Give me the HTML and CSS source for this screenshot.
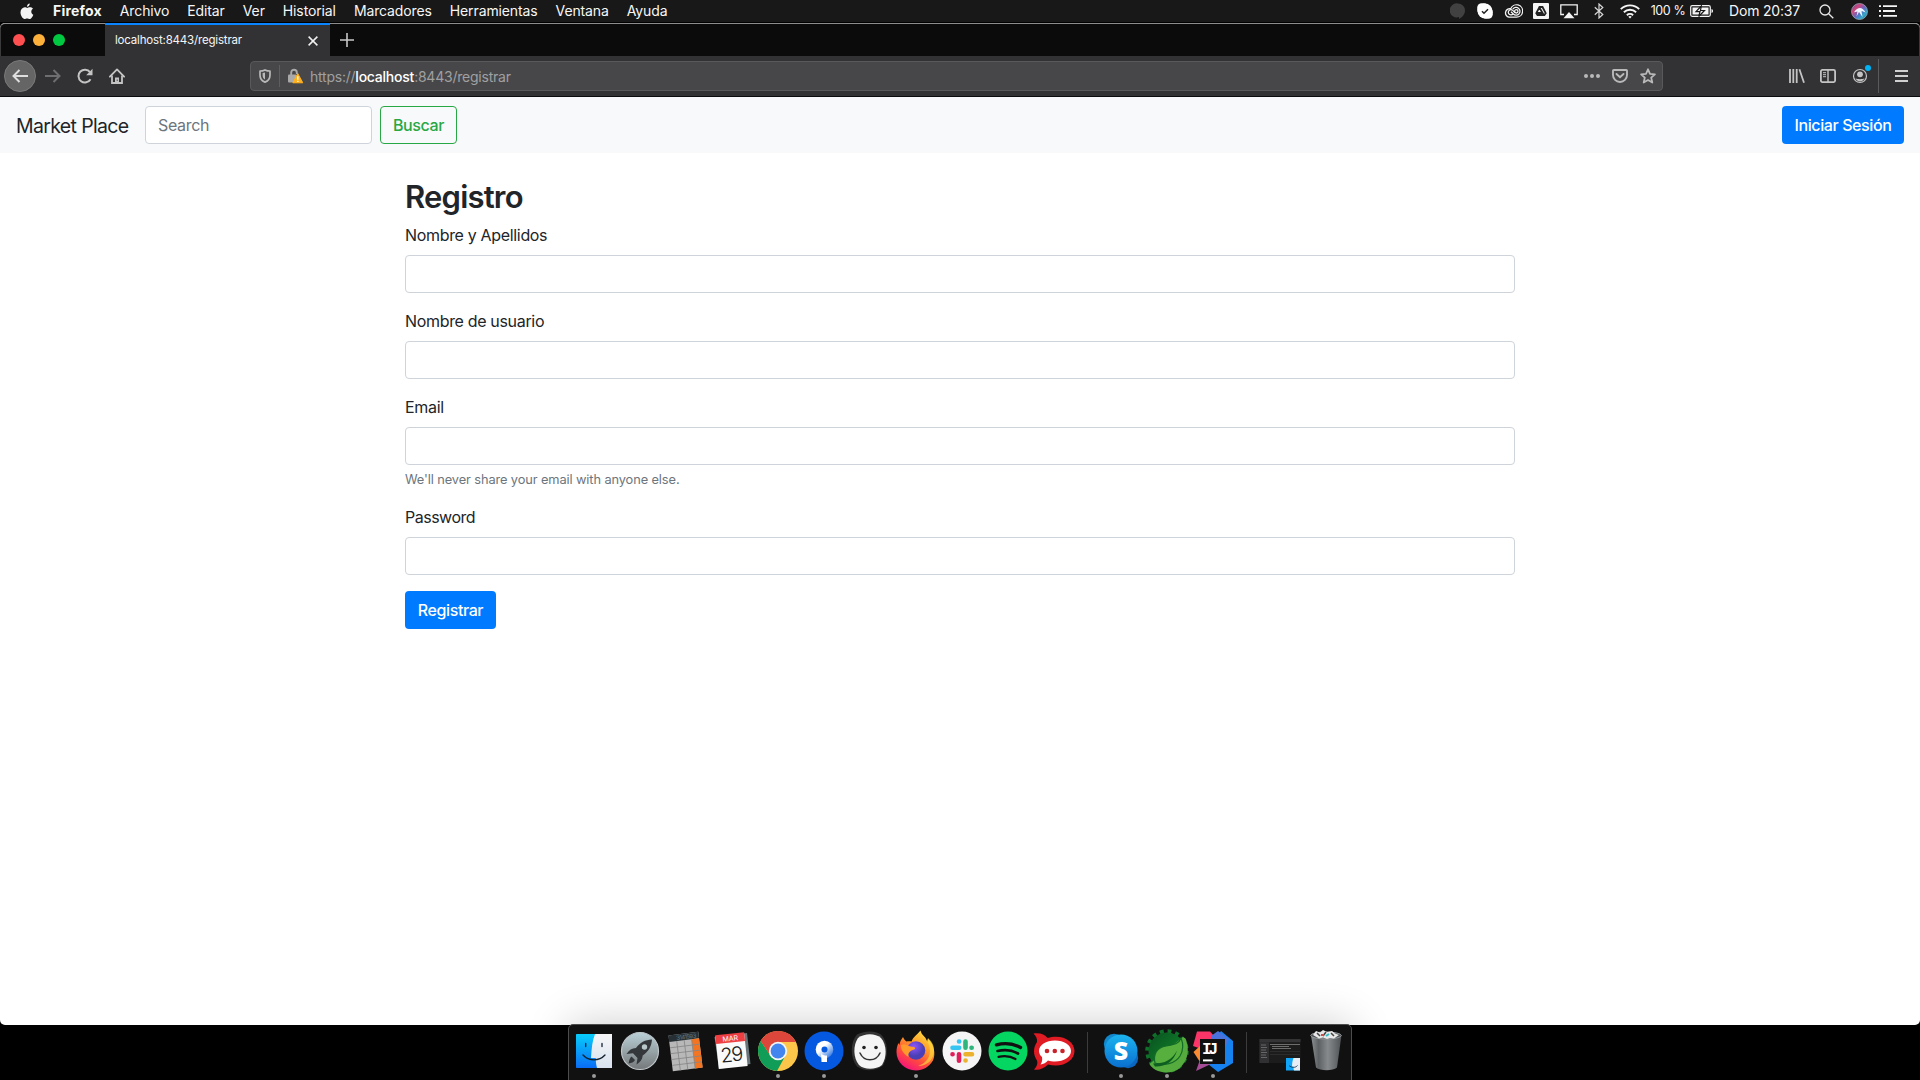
FILE: index.html
```html
<!DOCTYPE html>
<html lang="es">
<head>
<meta charset="utf-8">
<title>Registro</title>
<link rel="stylesheet" href="styles.css">
</head>
<body>
<div class="screen">
  <header class="menubar">
    <nav class="app-menu">
      <svg class="apple" width="14" height="17" viewBox="0 0 14 17"><path fill="#f4f4f4" d="M9.900 4.300c-1.100-.1-2 .6-2.600.6S5.800 4.300 4.800 4.300C2.600 4.400.5 6.200.5 9.300c0 3.200 2.200 6.700 4 6.700.9 0 1.400-.6 2.600-.6s1.600.6 2.600.6c1.500 0 3-2.400 3.600-4.300-2.500-1.100-2.700-4.700-.3-6-.8-1-1.900-1.400-3.100-1.400zM9.700.5C8.200.7 6.900 2 7 3.800 8.600 3.800 9.900 2.300 9.700.5z"/></svg>
      <span class="app-name">Firefox</span>
      <span>Archivo</span>
      <span>Editar</span>
      <span>Ver</span>
      <span>Historial</span>
      <span>Marcadores</span>
      <span>Herramientas</span>
      <span>Ventana</span>
      <span>Ayuda</span>
    </nav>
    <div class="status">
      <svg width="16" height="18" viewBox="0 0 16 18"><path fill="#414141" d="M8 1.500a7 7 0 0 1 7 7c0 4-3 7-6 8.500v-2A7 7 0 1 1 8 1.500z"/></svg>
      <svg width="16" height="16" viewBox="0 0 16 16"><rect x=".2" y=".2" width="11" height="11" rx="4.500" fill="#fff"/><rect x="4.800" y="4.800" width="11" height="11" rx="4.500" fill="#fff"/><circle cx="8" cy="8" r="7.500" fill="#fff"/><path d="M5 8.200l2 2 4-4" stroke="#222" stroke-width="1.500" fill="none"/></svg>
      <svg width="20" height="14" viewBox="0 0 20 14" fill="none" stroke="#f4f4f4" stroke-width="1.300"><path d="M6 13.200h7.500a6.200 6.200 0 1 0-5.800-8.500A4.300 4.300 0 1 0 6 13.200z"/><path d="M10 9.800a2.600 2.600 0 1 1-.3-3.400l2.400 2.300"/><path d="M9.800 5.200a3.900 3.900 0 1 1 .5 4.800L8 7.800"/><circle cx="13.300" cy="7.300" r="1.700"/></svg>
      <svg width="16" height="16" viewBox="0 0 16 16"><rect width="16" height="16" rx="1" fill="#f4f4f4"/><path fill="none" stroke="#222" stroke-width="1.800" d="M6.500 4h3l3.200 6.200L11.400 12H4.500L3.300 10.200zM6.300 4.500L9.600 10H4"/></svg>
      <svg width="18" height="15" viewBox="0 0 18 15"><path fill="none" stroke="#f4f4f4" stroke-width="1.300" d="M4 10.500H.8V.9h16.400v9.600H14"/><path fill="#f4f4f4" d="M9 8l5.500 6.300h-11z"/></svg>
      <svg width="10" height="16" viewBox="0 0 10 16"><path fill="none" stroke="#d8d8d8" stroke-width="1.200" d="M.8 4.300l8 7.200L5 15V1l3.800 3.500-8 7.200"/></svg>
      <svg width="20" height="15" viewBox="0 0 20 15" fill="none" stroke="#f4f4f4" stroke-width="1.900"><path d="M.8 5.200a13 13 0 0 1 18.400 0M3.900 8.300a8.700 8.700 0 0 1 12.200 0M6.900 11.200a4.500 4.500 0 0 1 6.200 0"/><path fill="#f4f4f4" stroke="none" d="M8.300 12.800a2.500 2.500 0 0 1 3.400 0L10 14.600z"/></svg>
      <span class="battery-text">100&nbsp;%</span>
      <svg width="24" height="12" viewBox="0 0 24 12"><rect x=".7" y=".7" width="19.600" height="10.600" rx="1.500" fill="none" stroke="#f4f4f4" stroke-width="1.200"/><path fill="#f4f4f4" d="M2.500 2.500h16v7h-16zM21.500 4c2 .5 2 3.500 0 4z"/><path d="M11.300 1L6 6.700h4L8.700 11.500l5.800-6h-4z" fill="#f4f4f4" stroke="#181818" stroke-width="1.200"/></svg>
      <span class="clock">Dom 20:37</span>
      <svg width="15" height="15" viewBox="0 0 15 15" fill="none" stroke="#e8e8e8" stroke-width="1.300"><circle cx="6" cy="6" r="5"/><path d="M9.700 9.700l4.600 4.600"/></svg>
      <svg width="17" height="17" viewBox="0 0 17 17"><defs><linearGradient id="siri" x1="0" y1="0" x2="1" y2="1"><stop offset="0" stop-color="#4a5a9c"/><stop offset=".3" stop-color="#d0447c"/><stop offset=".55" stop-color="#5c6cc4"/><stop offset=".75" stop-color="#2fa9c8"/><stop offset="1" stop-color="#2b4f90"/></linearGradient></defs><circle cx="8.500" cy="8.500" r="8" fill="url(#siri)" stroke="#a8b0ba" stroke-width=".7"/><path d="M3 9.200c2-3 4-4.200 6-4.200s4 1.500 5.500 4.500c-1.800-.8-3-1.500-4-1.200l1 5.700C10 12 9 10 8 9L5.500 13.500 6.500 8.500z" fill="#eef6ff"/></svg>
      <svg width="18" height="12" viewBox="0 0 18 12" stroke="#f4f4f4" stroke-width="1.800"><path d="M0 1.200h2M4 1.200h14M0 6h2M4 6h12M0 10.800h2M4 10.800h14"/></svg>
    </div>
  </header>

  <section class="window">
    <div class="tabbar">
      <div class="lights"><i class="light close"></i><i class="light minimize"></i><i class="light zoom"></i></div>
      <div class="tab"><span class="tab-title">localhost:8443/registrar</span><svg width="10" height="10" viewBox="0 0 10 10"><path d="M.6.600l8.800 8.800M9.400.600L.6 9.400" stroke="#f0f0f0" stroke-width="1.500"/></svg></div>
      <svg class="new-tab" width="14" height="14" viewBox="0 0 14 14"><path d="M7 0v14M0 7h14" stroke="#c8c8c8" stroke-width="1.600"/></svg>
    </div>
    <div class="toolbar">
      <div class="nav-buttons">
        <span class="back"><svg width="16" height="14" viewBox="0 0 16 14"><path d="M16 7H1.500M7.500 1l-6 6 6 6" fill="none" stroke="#dedede" stroke-width="2"/></svg></span>
        <svg width="16" height="14" viewBox="0 0 16 14"><path d="M0 7h14.500M8.500 1l6 6-6 6" fill="none" stroke="#6e6e70" stroke-width="2"/></svg>
        <svg width="16" height="16" viewBox="0 0 16 16"><path d="M13.500 11.200A6.400 6.400 0 1 1 13 4.200" fill="none" stroke="#c4c4c4" stroke-width="2"/><path d="M15.500.8v6.400H9.200z" fill="#c4c4c4"/></svg>
        <svg width="16" height="16" viewBox="0 0 16 16"><path d="M.9 8.700L8 1.400l7.100 7.300" fill="none" stroke="#c4c4c4" stroke-width="1.800" stroke-linejoin="round" stroke-linecap="round"/><path d="M3 7.500V15h10V7.500" fill="none" stroke="#c4c4c4" stroke-width="1.800"/><path d="M6 15V9.500h4V15z" fill="#c4c4c4"/><path d="M8.200 11.600v1.200" stroke="#323234" stroke-width="1"/></svg>
      </div>
      <div class="urlbar">
        <svg class="shield" width="12" height="14" viewBox="0 0 12 14"><path d="M6 .9C4.500 1.600 2.800 2 1 2v4c0 3.500 1.500 5.800 5 7.100 3.500-1.300 5-3.600 5-7.100V2C9.200 2 7.500 1.600 6 .9z" fill="none" stroke="#b9b9ba" stroke-width="1.700" stroke-linejoin="round"/><path d="M6 3.500v7C4.300 9.500 3.600 8 3.600 6V4.100C4.500 4 5.300 3.800 6 3.500z" fill="#b9b9ba"/></svg>
        <i class="url-divider"></i>
        <svg class="lock" width="15" height="16" viewBox="0 0 15 16"><path d="M3.200 8V4.500a2.800 2.800 0 0 1 5.600 0V6" fill="none" stroke="#a9a9aa" stroke-width="1.900"/><rect x="0" y="6.500" width="8.500" height="8" rx="1" fill="#a9a9aa"/><path d="M9.800 5.600l5 9.200H4.800z" fill="#ffb01c" stroke="#ffb01c" stroke-width="1" stroke-linejoin="round"/><path d="M9.800 8.300v3.400M9.800 12.700v1.400" stroke="#fff" stroke-width="1.300"/></svg>
        <span class="url">https://<b>localhost</b>:8443/registrar</span>
        <span class="url-actions">
          <svg width="16" height="4" viewBox="0 0 16 4" fill="#b9b9ba"><circle cx="2" cy="2" r="2"/><circle cx="8" cy="2" r="2"/><circle cx="14" cy="2" r="2"/></svg>
          <svg width="16" height="14" viewBox="0 0 16 14" fill="none" stroke="#b9b9ba" stroke-width="1.900"><path d="M1.800 1h12.400c.5 0 .8.300.8.800V6A7 7 0 0 1 1 6V1.800c0-.5.300-.8.800-.8z"/><path d="M4.500 5L8 8.300 11.500 5" stroke-linecap="round"/></svg>
          <svg width="16" height="16" viewBox="0 0 16 16"><path d="M8 1.300l2 4.500 4.900.5-3.700 3.300 1.100 4.900L8 12l-4.300 2.500 1.100-4.900L1.100 6.300 6 5.800z" fill="none" stroke="#b9b9ba" stroke-width="1.800" stroke-linejoin="round"/></svg>
        </span>
      </div>
      <div class="tools">
        <svg class="library" width="16" height="14" viewBox="0 0 16 14" stroke="#c4c4c4" stroke-width="1.800"><path d="M1 0v14M4.300 0v14M7.700 0v14M10.400.300l4.600 13.400"/></svg>
        <svg width="16" height="14" viewBox="0 0 16 14" fill="none" stroke="#c4c4c4"><rect x=".9" y=".9" width="14.200" height="12.200" rx="1.500" stroke-width="1.800"/><path d="M8 1v12" stroke-width="1.400"/><path d="M3 3.700h3M3 5.700h3M3 7.700h3" stroke-width="1"/></svg>
        <span class="account"><svg width="16" height="16" viewBox="0 0 16 16"><circle cx="8" cy="8" r="6.500" fill="none" stroke="#c4c4c4" stroke-width="1.200"/><circle cx="8" cy="6.300" r="2.900" fill="#c4c4c4"/><path d="M3.500 10.300c2 1.200 7 1.200 9 0-.7 2-2.300 3.200-4.500 3.200s-3.800-1.200-4.500-3.200z" fill="#c4c4c4"/></svg><i class="badge"></i></span>
        <i class="tools-divider"></i>
        <svg width="13" height="12" viewBox="0 0 13 12" stroke="#d0d0d0" stroke-width="2"><path d="M0 1h13M0 6h13M0 11h13"/></svg>
      </div>
    </div>

    <div class="page">
      <nav class="navbar">
        <a class="brand">Market Place</a>
        <div class="control search">Search</div>
        <a class="btn btn-outline">Buscar</a>
        <a class="btn btn-primary login">Iniciar Sesión</a>
      </nav>
      <main class="container">
        <h2>Registro</h2>
        <div class="group"><label>Nombre y Apellidos</label><div class="control"></div></div>
        <div class="group"><label>Nombre de usuario</label><div class="control"></div></div>
        <div class="group"><label>Email</label><div class="control"></div><small>We'll never share your email with anyone else.</small></div>
        <div class="group"><label class="password">Password</label><div class="control"></div></div>
        <a class="btn btn-primary submit">Registrar</a>
      </main>
    </div>
  </section>

  <footer class="dock-area">
    <div class="dock">
      <div class="app running"><svg viewBox="0 0 44 44"><defs><linearGradient id="fin" x1="0" y1="0" x2="0" y2="1"><stop offset="0" stop-color="#08cdfb"/><stop offset="1" stop-color="#0a6df5"/></linearGradient><linearGradient id="fin2" x1="0" y1="0" x2="0" y2="1"><stop offset="0" stop-color="#f6f6f8"/><stop offset="1" stop-color="#d8e2ee"/></linearGradient></defs><rect x="4" y="5" width="36" height="34" rx=".8" fill="url(#fin)"/><path d="M23 5h17v34H25c-1-4-1.300-7-1.200-10H19C19.500 19 20.500 11 23 5z" fill="url(#fin2)"/><path d="M11 26c6 6.500 16 6.500 22 0M13.700 14.500v3M30 14.500v3" fill="none" stroke="#12202e" stroke-width="1.300" stroke-linecap="round"/></svg></div>
      <div class="app"><svg viewBox="0 0 44 44"><defs><linearGradient id="lau" x1="0" y1="0" x2="0" y2="1"><stop offset="0" stop-color="#b9d0d6"/><stop offset="1" stop-color="#75787a"/></linearGradient></defs><circle cx="22" cy="22" r="18.500" fill="url(#lau)" stroke="#bfc6ca" stroke-width="1.200"/><path d="M34 10.500c-7 .3-12 3-16 8.500-4 0-7 2-9.500 6l6.500-.7 4.500 4.700-1 6.500c3.500-2 6-5 6.200-9C30.500 22.500 33.500 17.500 34 10.500z" fill="#34383b"/><circle cx="26.500" cy="18" r="2.700" fill="#b9c7cb"/><path d="M13.500 27.500c-1.800 1.500-2.500 4-2.800 7 2.800-.4 5-1.300 6.300-3.500z" fill="#34383b"/></svg></div>
      <div class="app"><svg viewBox="0 0 44 44"><g transform="rotate(-7 22 22)"><rect x="6.500" y="4.500" width="30" height="36" fill="#b8b8b8"/><rect x="6.500" y="4.500" width="30" height="6.500" fill="#263034"/><rect x="29" y="11" width="7.500" height="29.500" fill="#f47521"/><path d="M6.500 16.900h30M6.500 22.800h30M6.500 28.700h30M6.500 34.600h30M14 11v29.500M21.500 11v29.500M29 11v29.500" stroke="#858585" stroke-width=".8"/><text x="14" y="10" font-size="6" fill="#66797e" font-family="Inter,sans-serif" textLength="20">3141593</text></g></svg></div>
      <div class="app"><svg viewBox="0 0 44 44"><path d="M4.500 8L37 4l3.500 31L9 40z" fill="#68757a"/><g transform="rotate(-6 22 22)"><rect x="7" y="5.500" width="29" height="33" fill="#fafafa"/><rect x="7" y="4.500" width="29" height="9" fill="#ee3f42"/><text x="21.500" y="11.800" font-size="7" fill="#fff" text-anchor="middle" font-family="Inter,sans-serif">MAR</text><text x="21.500" y="32.500" font-size="20" font-weight="300" fill="#202020" text-anchor="middle" font-family="Inter,sans-serif" textLength="23">29</text></g></svg></div>
      <div class="app running"><svg viewBox="0 0 44 44"><circle cx="22" cy="22" r="20" fill="#fbc64a"/><path d="M4.700 12A20 20 0 0 0 21 42l8.500-15.500L22 22l-7.500 4.500z" fill="#0f9d58"/><path d="M4.700 12A20 20 0 0 1 39.900 13H22L14.500 26.500z" fill="#dc463b"/><circle cx="22" cy="22" r="9.200" fill="#f5f5f5"/><circle cx="22" cy="22" r="7.400" fill="#4285ee"/></svg></div>
      <div class="app running"><svg viewBox="0 0 44 44"><defs><linearGradient id="st" x1="0" y1="0" x2="1" y2="1"><stop offset=".4" stop-color="#fff"/><stop offset="1" stop-color="#0057dc"/></linearGradient></defs><circle cx="22" cy="22" r="19.500" fill="#0558e0"/><circle cx="22.500" cy="20.500" r="8.800" fill="url(#st)"/><path d="M19 22c0 3 .8 4.500 6 4.500V33h-5.500z" fill="#fff"/><circle cx="22.500" cy="20.500" r="3" fill="#0558e0"/></svg></div>
      <div class="app"><svg viewBox="0 0 44 44"><path d="M9 5.500c8-4 18-4 24 0 7 7 8 21 2 31-7 6-19 6-26 1C2 29 2 13 9 5.500z" fill="#333"/><path d="M10 9c7-5 17-5 23 0 6 7 6 19 1 27-6 5-18 5-23 0C5 29 5 16 10 9z" fill="#f5f5f5"/><circle cx="16" cy="18.500" r="1.800" fill="#222"/><circle cx="28" cy="18.500" r="1.800" fill="#222"/><path d="M12 24c4 9 16 9 20 0" fill="none" stroke="#333" stroke-width="1.500" stroke-linecap="round"/></svg></div>
      <div class="app running"><svg viewBox="0 0 44 44"><defs><linearGradient id="ff" x1=".85" y1="0" x2=".3" y2="1"><stop offset="0" stop-color="#ffe84a"/><stop offset=".4" stop-color="#ff9a26"/><stop offset=".7" stop-color="#ff4a3e"/><stop offset="1" stop-color="#f4127e"/></linearGradient><radialGradient id="ffb" cx=".4" cy=".3"><stop offset="0" stop-color="#8f55ff"/><stop offset="1" stop-color="#4a3fb4"/></radialGradient></defs><path d="M9 8c1 2 2 3.500 3.500 4.500 1.500-.5 3-.5 5 0C19 8 23 6 26.500 1.500c1 4 3 5 5 7.500l2 4 .5-3.500c6 6 8 15 5 22C35 38 29 41.500 22 41.500 11 41.500 2.500 33 2.500 23c0-3 .5-6 2-9l.8 2C6 13 7 10.500 9 8z" fill="url(#ff)"/><path d="M27 3c1 5 9 9 9 19 0 8-6 13-12 15 10 0 16-7 16-16 0-6-3-9-6-12l-1 3c-3-3-5-5-6-9z" fill="#ffd83f" opacity=".65"/><circle cx="22" cy="21.500" r="9.300" fill="url(#ffb)"/><path d="M7 16c4-2 6 1 10 1.500 3 .3 5 1 4 2.500-2 1.500-4 1-5.500 3-1.500 1.500-1 4-1 5-3-2-8-6-7.500-12z" fill="#ff9a2b"/></svg></div>
      <div class="app"><svg viewBox="0 0 44 44"><circle cx="22" cy="22" r="19.500" fill="#f5f5f5"/><g stroke-width="4.600" stroke-linecap="round"><path d="M12.500 18.700h6.700M19 12.500h.2" stroke="#36c5f0"/><path d="M25.500 12.500v6.200M31.500 18.700h.2" stroke="#2eb67d"/><path d="M25.500 25.300h6.500M25.500 31.500h.1" stroke="#ecb22e"/><path d="M19 25.300v6.500M12.500 25.300h.1" stroke="#e01e5a"/></g></svg></div>
      <div class="app"><svg viewBox="0 0 44 44"><circle cx="22" cy="22" r="19.500" fill="#05d561"/><g fill="none" stroke="#111" stroke-linecap="round"><path d="M10.500 15.800c8-2 17-1.200 24 2.700" stroke-width="3.400"/><path d="M11.500 22c7-1.700 14.500-1 20.500 2.500" stroke-width="2.700"/><path d="M12.500 27.800c6-1.300 12-.8 17 2.200" stroke-width="2.200"/></g></svg></div>
      <div class="app"><svg viewBox="0 0 44 44"><path d="M1.500 4.500C8 3.500 13 5.500 15.500 9 30 4.500 42.500 12 42.500 22S30 39.500 16 35.500C12 39.500 7 41.500 2 40.500c3-3 4-6 3-9-4-5.500-4-13 0-18.500.5-3-1-6-3.500-8.500z" fill="#e01b24"/><path d="M23 11.500c9 0 16 4.500 16 10.500s-7 10.500-16 10.500c-2.500 0-5-.3-7-1-2 2.200-4.500 3.500-7.500 4C10 33 10.500 31 10 28c-2-1.500-3-4-3-6 0-6 7-10.500 16-10.500z" fill="#fff"/><g fill="#c8222a"><circle cx="15" cy="22" r="2.300"/><circle cx="22.800" cy="22" r="2.300"/><circle cx="30.500" cy="22" r="2.300"/></g></svg></div>
      <i class="sep"></i>
      <div class="app running"><svg viewBox="0 0 44 44"><defs><linearGradient id="sk" x1="0" y1="0" x2="0" y2="1"><stop offset="0" stop-color="#1bb4ef"/><stop offset="1" stop-color="#0a6fd0"/></linearGradient></defs><circle cx="15" cy="15" r="10.200" fill="#1187cc"/><circle cx="29" cy="29" r="10.200" fill="#0b66bf"/><circle cx="22" cy="22" r="16.500" fill="url(#sk)"/><text x="22" y="31" font-size="25" font-weight="800" fill="#fff" text-anchor="middle" font-family="'Open Sans',sans-serif">S</text></svg></div>
      <div class="app running"><svg viewBox="0 0 44 44"><defs><linearGradient id="sp" x1="0" y1="0" x2="1" y2="1"><stop offset="0" stop-color="#0a4f20"/><stop offset=".5" stop-color="#0d7226"/><stop offset=".8" stop-color="#4fa63a"/></linearGradient></defs><circle cx="22" cy="22" r="19.500" fill="none" stroke="#0f7029" stroke-width="4.500" stroke-dasharray="3.800 3.858"/><circle cx="22" cy="22" r="18.500" fill="url(#sp)"/><path d="M40.500 9.500c3 7 3.500 17-1 23.500-4 7-10 10.500-17.500 10.500C13 43.500 7 39.500 4.500 35L38 8z" fill="#55ab3d"/><path d="M36 9c-2 6-7 6.500-15 8C12 18.500 8 25 10 34c9 3 20 1 25-7 3.500-6 3.500-12 1-18z" fill="#57b03e" stroke="#126b26" stroke-width="1.200"/><path d="M8 34.500c10 .5 19-3 24-13-3 11-12 16.500-22 16z" fill="#0c5f20"/></svg></div>
      <div class="app running"><svg viewBox="0 0 44 44"><path d="M6 2.500h13L24 8 22 24 2 17z" fill="#fc3568"/><path d="M2.500 23L9 17l6 8-6 8z" fill="#f98c32"/><path d="M26 8l4-6 12 10v22L27 43 17 35 33 20z" fill="#1682f0"/><path d="M20 7l7-5 11 8-4 9H20z" fill="#4a72dc"/><path d="M12 22L5 42l17-8z" fill="#a54d96"/><rect x="9" y="10" width="25" height="25" fill="#101010"/><path d="M12 31.400h9.500" stroke="#fff" stroke-width="2"/><text x="11" y="24.500" font-size="16" font-weight="700" fill="#fff" font-family="'Liberation Mono',monospace" textLength="16">IJ</text></svg></div>
      <i class="sep"></i>
      <div class="app"><svg viewBox="0 0 44 44"><rect x="1.500" y="10" width="41" height="24" fill="#1c1c1d"/><rect x="1.500" y="10" width="41" height="3.200" fill="#343436"/><rect x="1.500" y="13.200" width="9.500" height="20.800" fill="#303032"/><path d="M3 16h5M3 18.500h6M3 21h5M3 23.500h6M3 26h5M3 28.500h6" stroke="#666" stroke-width="1"/><path d="M12 15.500h30M14 17.500h17M14 19.500h19" stroke="#777" stroke-width=".9"/><path d="M12 22.500h30M12 25.500h30" stroke="#333" stroke-width=".7"/><rect x="28" y="29" width="14" height="12.500" fill="#10a4f8"/><path d="M35.500 29H42v12.500h-6c-.5-1.500-.5-3-.5-4H34c0-3 .5-6 1.500-8.500z" fill="#e6edf5"/><path d="M31 36.500c2.500 2.500 6.500 2.500 8.500 0" fill="none" stroke="#16344f" stroke-width=".9"/></svg></div>
      <div class="app"><svg viewBox="0 0 44 44"><defs><linearGradient id="tr" x1="0" y1="0" x2="1" y2="0"><stop offset="0" stop-color="#8b9092"/><stop offset=".25" stop-color="#5d6163"/><stop offset=".55" stop-color="#868a8c"/><stop offset="1" stop-color="#4e5254"/></linearGradient></defs><path d="M7 6h30.500L33 38.500c-4 3.500-17 3.500-21 0z" fill="url(#tr)"/><ellipse cx="22" cy="6.500" rx="15.300" ry="3.500" fill="#4c5052" stroke="#979b9d"/><path d="M9 6l3-4 4 1.500L19 1l4 2 5-1 3 2.500 4 1.500-5 3.500-4-.5-3 1-4-1.500-4 1z" fill="#e8e8e8"/><path d="M13 4l3 3M22 3l-3 4M27 4l3 3" stroke="#454545" stroke-width="1.500"/><path d="M17 6h3" stroke="#ce4b48" stroke-width="2"/><path d="M22 7l3-2" stroke="#31bcc5" stroke-width="2"/></svg></div>
    </div>
  </footer>
</div>
</body>
</html>
```
FILE: styles.css
```css
* { box-sizing: border-box; }
body {
  margin: 0;
  background: #000;
  font-family: Inter, "Liberation Sans", sans-serif;
  overflow: hidden;
}
svg { display: block; flex: none; }
.screen { width: 1920px; height: 1080px; display: flex; flex-direction: column; }

.menubar {
  height: 23px;
  flex: none;
  display: flex;
  justify-content: space-between;
  background: #181818;
  border-bottom: 1px solid #000;
  color: #f6f6f6;
  font-size: 14px;
  line-height: 22px;
}
.app-menu { display: flex; align-items: center; gap: 18px; padding-left: 20px; letter-spacing: -.12px; }
.app-name { margin-left: 1px; font-weight: 700; letter-spacing: .2px; }
.status {
  display: grid;
  grid-template-columns: 28px 26px 30px 26px 30px 30px 31px 46px 21px 101px 26px 40px 18px;
  align-items: center;
  justify-items: center;
  padding-right: 23px;
}
.battery-text { font-size: 12.5px; letter-spacing: -.4px; }
.clock { padding-left: 4px; letter-spacing: -.2px; }

.window {
  height: 1002px;
  flex: none;
  display: flex;
  flex-direction: column;
  border-radius: 5px;
  overflow: hidden;
  background: #fff;
}
.tabbar {
  height: 33px;
  flex: none;
  display: flex;
  align-items: center;
  background: #0b0b0b;
  border: 1px solid #3a3a3a;
  border-top-color: #8d8d8d;
  border-bottom: 0;
  border-radius: 5px 5px 0 0;
}
.lights { width: 104px; padding-left: 12px; display: flex; gap: 8px; }
.light { width: 12px; height: 12px; border-radius: 50%; }
.close { background: #ff4f50; }
.minimize { background: #fdb13b; }
.zoom { background: #00c941; }
.tab {
  width: 225px;
  height: 33px;
  margin-top: -1px;
  padding: 0 12px 0 10px;
  display: flex;
  align-items: center;
  justify-content: space-between;
  background: #323234;
  border-top: 2px solid #0a84ff;
  color: #f6f6f6;
  font-size: 11.5px;
  letter-spacing: -.18px;
}
.tab-title { padding-bottom: 1px; }
.new-tab { margin-left: 10px; }

.toolbar {
  height: 41px;
  flex: none;
  display: flex;
  align-items: center;
  background: #323234;
  border-bottom: 1px solid #0c0c0d;
}
.nav-buttons { width: 250px; padding-left: 4px; display: flex; align-items: center; gap: 16px; }
.back {
  width: 32px;
  height: 32px;
  margin-right: -7px;
  display: grid;
  place-items: center;
  border-radius: 50%;
  background: #656566;
  border: 1px solid #7a7a7a;
}
.urlbar {
  width: 1413px;
  height: 30px;
  display: flex;
  align-items: center;
  padding: 0 6px 0 8px;
  background: #474749;
  border: 1px solid #59595b;
  border-radius: 4px;
  color: #a0a0a1;
  font-size: 14px;
  letter-spacing: -.23px;
}
.urlbar b { font-weight: 500; color: #fff; }
.url { padding-top: 1px; }
.url-divider { width: 1px; height: 22px; margin: 0 8px; background: #5e5e60; }
.lock { margin-right: 7px; }
.url-actions { margin-left: auto; display: flex; align-items: center; gap: 12px; }
.tools { flex: 1; display: flex; align-items: center; justify-content: flex-end; gap: 16px; padding-right: 12px; }
.library { margin-right: -1px; }
.account { position: relative; }
.badge { position: absolute; top: -3px; right: -3px; width: 6px; height: 6px; border-radius: 50%; background: #00b3f4; }
.tools-divider { width: 1px; height: 34px; margin-left: -6px; background: #5a5a5c; }

.page { flex: 1; color: #212529; font-size: 16px; line-height: 24px; letter-spacing: -.33px; }
.navbar { height: 56px; display: flex; align-items: center; padding: 0 16px; background: #f8f9fa; }
.brand { width: 129px; padding-top: 2px; font-size: 19.5px; letter-spacing: -.65px; white-space: nowrap; }
.control {
  height: 38px;
  padding: 6px 12px;
  background: #fff;
  border: 1px solid #ced4da;
  border-radius: 4px;
  color: #6c757d;
}
.search { width: 227px; margin-right: 8px; }
.btn {
  height: 38px;
  display: flex;
  align-items: center;
  justify-content: center;
  border-radius: 4px;
  font-weight: 500;
  letter-spacing: -.4px;
  white-space: nowrap;
}
.btn-outline { width: 77px; border: 1px solid #28a745; color: #28a745; }
.btn-primary { background: #007bff; color: #fff; }
.login { width: 122px; margin-left: auto; }
.submit { width: 91px; }
.container { width: 1110px; margin: 0 auto; padding-top: 25px; }
h2 { margin: 0 0 7px; font-size: 31px; font-weight: 600; line-height: 38.4px; letter-spacing: -.8px; }
.group { margin-bottom: 16px; }
label { display: block; margin-bottom: 8px; }
.password { letter-spacing: -.5px; }
small { display: block; margin-top: 4px; padding-top: 1px; height: 19.2px; font-size: 12.8px; line-height: 19.2px; letter-spacing: -.1px; color: #6c757d; }

.dock-area { flex: 1; display: flex; justify-content: center; padding-right: 1px; }
.dock {
  height: 60px;
  margin-top: -1px;
  padding: 0 2px;
  display: flex;
  background: #111;
  border: 1px solid #4c4c4c;
  border-radius: 5px 5px 0 0;
  box-shadow: 0 0 44px rgba(0, 0, 0, .2);
}
.app { width: 46px; padding-top: 4px; display: flex; flex-direction: column; align-items: center; }
.app svg { width: 44px; height: 44px; }
.running::after { content: ""; width: 4px; height: 4px; margin-top: 1px; border-radius: 50%; background: #999; }
.sep { width: 1px; height: 41px; margin: 7px 10px 0; background: #3c3c3c; }
```
